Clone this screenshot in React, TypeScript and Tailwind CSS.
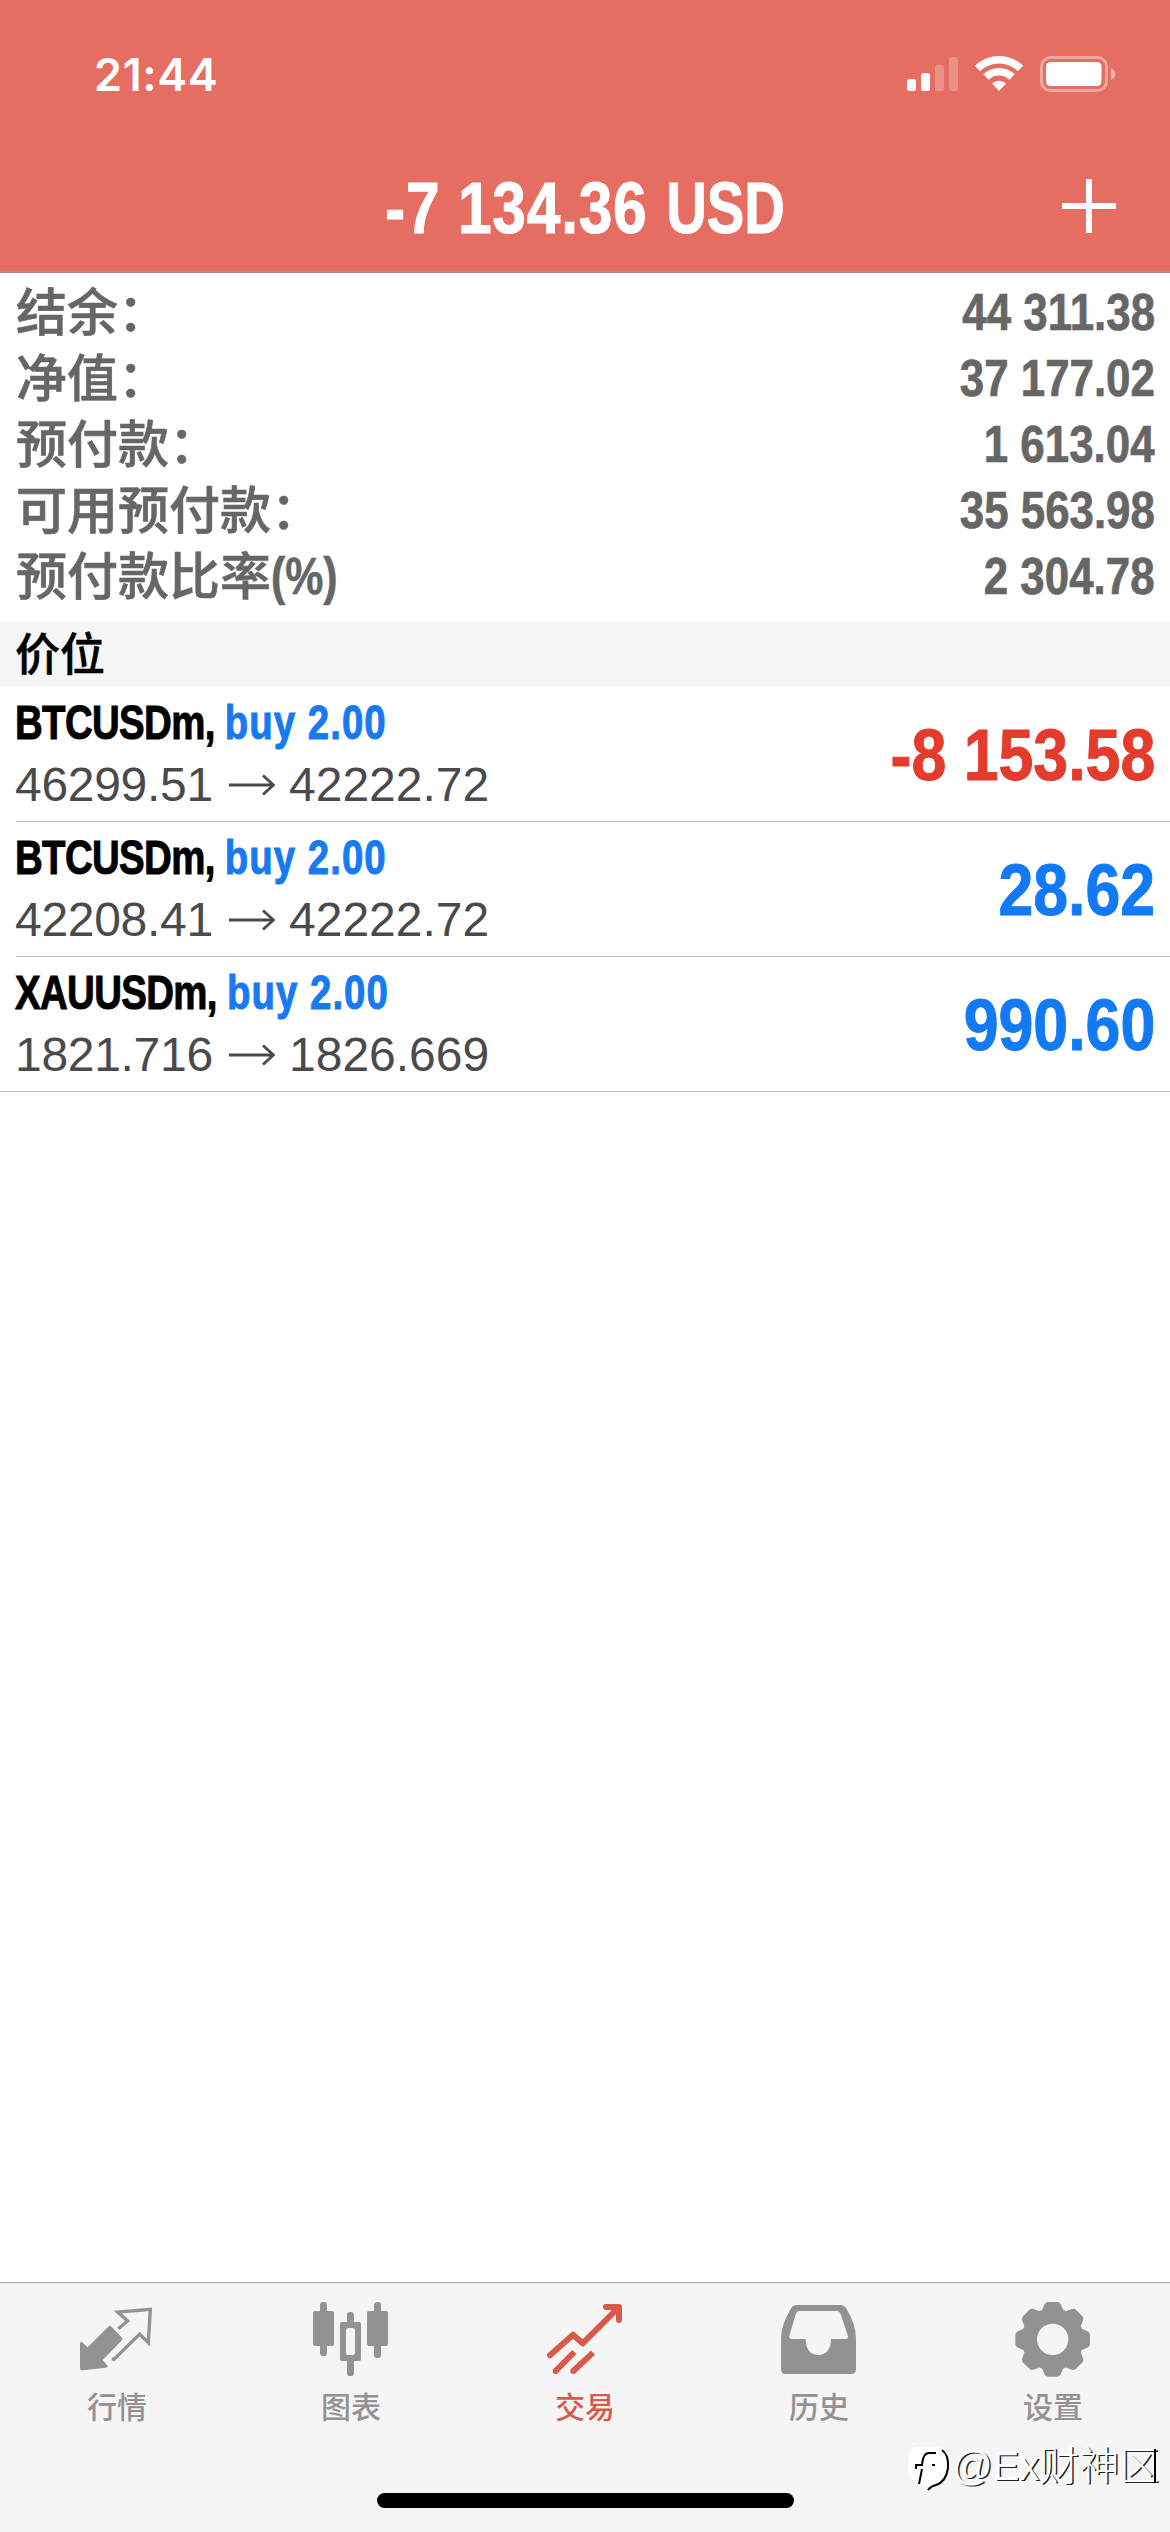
import type { ReactNode } from "react";

const summary = [
  { label: "结余：", value: "44 311.38" },
  { label: "净值：", value: "37 177.02" },
  { label: "预付款：", value: "1 613.04" },
  { label: "可用预付款：", value: "35 563.98" },
  { label: "预付款比率", unit: "(%)", value: "2 304.78" },
];

const positions = [
  { symbol: "BTCUSDm", side: "buy 2.00", open: "46299.51", current: "42222.72", profit: "-8 153.58", loss: true },
  { symbol: "BTCUSDm", side: "buy 2.00", open: "42208.41", current: "42222.72", profit: "28.62", loss: false },
  { symbol: "XAUUSDm", side: "buy 2.00", open: "1821.716", current: "1826.669", profit: "990.60", loss: false },
];

function StatusBar() {
  return (
    <div className="flex h-[150px] items-start justify-between pl-[94px] pr-[54px] pt-[48px] text-white">
      <div className="font-['Inter',sans-serif] text-[45px] font-semibold leading-[54px] tracking-[0.6px]">21:44</div>
      <svg className="mt-1" width="210" height="44" viewBox="906 52 210 44" fill="white">
        <rect x="907" y="79" width="9" height="12" rx="2.5" />
        <rect x="921" y="73" width="9" height="18" rx="2.5" />
        <rect x="935" y="65" width="9" height="26" rx="2.5" opacity="0.25" />
        <rect x="949" y="57" width="9" height="34" rx="2.5" opacity="0.25" />
        <g fill="none" stroke="white" strokeWidth="7.5">
          <path d="M977.5 68.5 A30.5 30.5 0 0 1 1020.5 68.5" />
          <path d="M986 77 A18.5 18.5 0 0 1 1012 77" />
        </g>
        <path d="M999 91 L992 83.5 A10 10 0 0 1 1006 83.5 Z" />
        <rect x="1041.5" y="57.5" width="65" height="33" rx="9" fill="none" stroke="white" strokeWidth="3" opacity="0.4" />
        <rect x="1046" y="62" width="55.5" height="24" rx="4.5" />
        <path d="M1111 68 C1117 71 1117 77 1111 80 Z" opacity="0.5" />
      </svg>
    </div>
  );
}

function Header() {
  return (
    <header className="h-[273px] border-b-2 border-[#c08583] bg-[#e56d61]">
      <StatusBar />
      <div className="grid h-[112px] grid-cols-[1fr_auto_1fr] items-center">
        <h1 className="col-start-2 origin-center scale-x-[0.84] whitespace-nowrap pt-[3px] text-[72px] font-bold leading-none text-white [-webkit-text-stroke:1px]">
          <span className="tracking-[0.9px]">-7 134.36 </span>
          <span className="-ml-[9px] inline-block origin-right scale-x-[0.93]">USD</span>
        </h1>
        <svg className="mr-[54px] justify-self-end" width="54" height="54" viewBox="0 0 54 54" stroke="white" strokeWidth="6">
          <path d="M0 27h54M27 0v54" />
        </svg>
      </div>
    </header>
  );
}

function Summary() {
  return (
    <section className="h-[348px] pt-[6px] text-[#666]">
      {summary.map((row) => (
        <div key={row.label} className="flex h-[66px] items-center justify-between pl-[16px] pr-[15px]">
          <span className="-mt-[6px] flex items-center font-['Noto_Sans_CJK_SC',sans-serif] text-[51px] font-medium leading-[51px] [-webkit-text-stroke:0.6px]">
            {row.label}
            {row.unit && (
              <span className="origin-left scale-x-[0.84] pt-[6px] font-['Liberation_Sans',sans-serif] font-bold">{row.unit}</span>
            )}
          </span>
          <span className="origin-right scale-x-[0.86] text-[51px] font-bold leading-[51px] [-webkit-text-stroke:0.7px]">
            {row.value}
          </span>
        </div>
      ))}
    </section>
  );
}

function Arrow() {
  return (
    <svg width="46" height="22" viewBox="0 0 46 22" fill="none" stroke="#4a4a4c" strokeWidth="2.8">
      <path d="M0 11h44M34 1.5l10.5 9.5L34 20.5" />
    </svg>
  );
}

function Positions() {
  return (
    <section className="border-b border-[#bfbfc2]">
      {positions.map((p, i) => (
        <div key={i} className="pl-[16px]">
          <div className={`flex h-[135px] items-center justify-between pr-[15px] ${i > 0 ? "border-t border-[#bfbfc2]" : ""}`}>
            <div className="-ml-[1px]">
              <div className="w-[600px] origin-left scale-x-[0.8] whitespace-nowrap text-[48px] font-bold leading-[62px] tracking-[-0.8px] text-black [-webkit-text-stroke:1px]">
                {p.symbol}, <span className="tracking-[1.3px] text-[#187af0]">{p.side}</span>
              </div>
              <div className="flex items-center text-[48px] leading-[62px] text-[#4a4a4c]">
                <span className="w-[214px] tracking-[-0.3px]">{p.open}</span>
                <Arrow />
                <span className="pl-[14px]">{p.current}</span>
              </div>
            </div>
            <div
              className={`origin-right scale-x-[0.87] pt-[2px] text-[72px] font-bold [-webkit-text-stroke:1px] ${p.loss ? "text-[#e33b2c]" : "text-[#127af5]"}`}
            >
              {p.profit}
            </div>
          </div>
        </div>
      ))}
    </section>
  );
}

function Tab({ label, active, viewBox, children }: { label: string; active?: boolean; viewBox: string; children: ReactNode }) {
  return (
    <div className={`flex flex-1 flex-col items-center ${active ? "text-[#d9594c]" : "text-[#929292]"}`}>
      <svg width="80" height="80" viewBox={viewBox} fill="currentColor">
        {children}
      </svg>
      <span className="mt-[7px] text-[30px] font-medium leading-[44px]">{label}</span>
    </div>
  );
}

function TabBar() {
  return (
    <nav className="relative h-[250px] border-t border-[#a9a9a9] bg-[#f5f5f5] pt-[16px]">
      <div className="flex">
        <Tab label="行情" viewBox="111 87 240 240">
          <path d="M207 168 Q211 166 215 171 L246 203 Q249 207 246 211 L188 270 L203 288 Q204 292 198 293 L128 301 Q120 301 120 293 V219 Q122 213 126 217 L143 232 Z" />
          <path d="M235 176 L263 153 L233 126 L331 118 L325 218 L299 192 L222 268 L215 267" fill="none" stroke="currentColor" strokeWidth="10" />
        </Tab>
        <Tab label="图表" viewBox="813 87 240 240">
          <rect x="819" y="123" width="63" height="105" rx="6" />
          <rect x="840" y="96" width="21" height="162" rx="10" />
          <rect x="981" y="123" width="63" height="105" rx="6" />
          <rect x="1002" y="96" width="21" height="168" rx="10" />
          <rect x="921" y="126" width="21" height="50" rx="10" />
          <rect x="921" y="250" width="21" height="68" rx="10" />
          <rect x="900" y="156" width="63" height="117" rx="6" />
          <rect x="918" y="174" width="27" height="81" rx="7" fill="#f5f5f5" />
        </Tab>
        <Tab label="交易" active viewBox="135 87 240 240">
          <g fill="none" stroke="currentColor" strokeWidth="18" strokeLinecap="round" strokeLinejoin="round">
            <path d="M150 256 L219 194 L248 220 L350 118" />
            <path d="M318 111 H357 V150" />
          </g>
          <g fill="none" stroke="currentColor" strokeWidth="18">
            <path d="M167 303 L223 246 M220 303 L279 248" />
            <path d="M167 303h0.1M220 303h0.1" strokeLinecap="round" />
          </g>
        </Tab>
        <Tab label="历史" viewBox="837 87 240 240">
          <path
            fillRule="evenodd"
            d="M892 105 H1020 Q1034 105 1040 117 Q1068 165 1068 205 V298 Q1068 312 1054 312 H857 Q843 312 843 298 V205 Q843 165 872 117 Q878 105 892 105 Z M898 123 Q891 123 887 133 L868 198 Q866 207 876 207 H917 C917 235 930 255 955 255 C980 255 993 235 993 207 H1036 Q1046 207 1044 198 L1022 133 Q1018 123 1010 123 Z"
          />
        </Tab>
        <Tab label="设置" viewBox="429 87 240 240">
          <g transform="translate(548 208)">
            <circle r="70" fill="none" stroke="currentColor" strokeWidth="46" />
            {[0, 45, 90, 135, 180, 225, 270, 315].map((a) => (
              <path key={a} transform={`rotate(${a})`} d="M-38 -80 C-26 -90 -28 -112 -13 -112 H13 C28 -112 26 -90 38 -80 Z" />
            ))}
          </g>
        </Tab>
      </div>
      <div className="absolute left-[906px] top-[157px] flex items-center">
        <svg width="46" height="50" viewBox="0 0 46 50" fill="none">
          <path d="M10 6 H33 Q42 8 42 24 Q42 42 30 43 L24 48 L20 44 Q2 43 2 25 Q2 8 10 6 Z" fill="white" />
          <path d="M36 9 Q43 14 42 27 Q40 41 30 44 Q25 45 22 49" stroke="black" strokeWidth="2" />
          <path d="M13 43 L16 28 M10 28 V24 H16 Q17 12 23 12 H30 M26 24 H29" stroke="black" strokeWidth="2" />
        </svg>
        <span className="flex items-center text-[40px] font-light leading-[52px] text-white [text-shadow:1.5px_1px_0_#222]">
          @Ex财神区
          <i className="-ml-[5px] h-[34px] w-[2px] bg-black" />
        </span>
      </div>
      <div className="absolute bottom-[24px] left-[377px] h-[15px] w-[417px] rounded-full bg-black" />
    </nav>
  );
}

export default function App() {
  return (
    <div className="flex h-[2532px] w-[1170px] flex-col overflow-hidden bg-white font-['Liberation_Sans','Noto_Sans_CJK_SC',sans-serif]">
      <Header />
      <Summary />
      <h2 className="flex h-[65px] items-center bg-[#f6f6f6] pl-[15px] pt-[4px] text-[45px] font-medium text-black [-webkit-text-stroke:0.5px]">
        价位
      </h2>
      <Positions />
      <div className="flex-1" />
      <TabBar />
    </div>
  );
}
